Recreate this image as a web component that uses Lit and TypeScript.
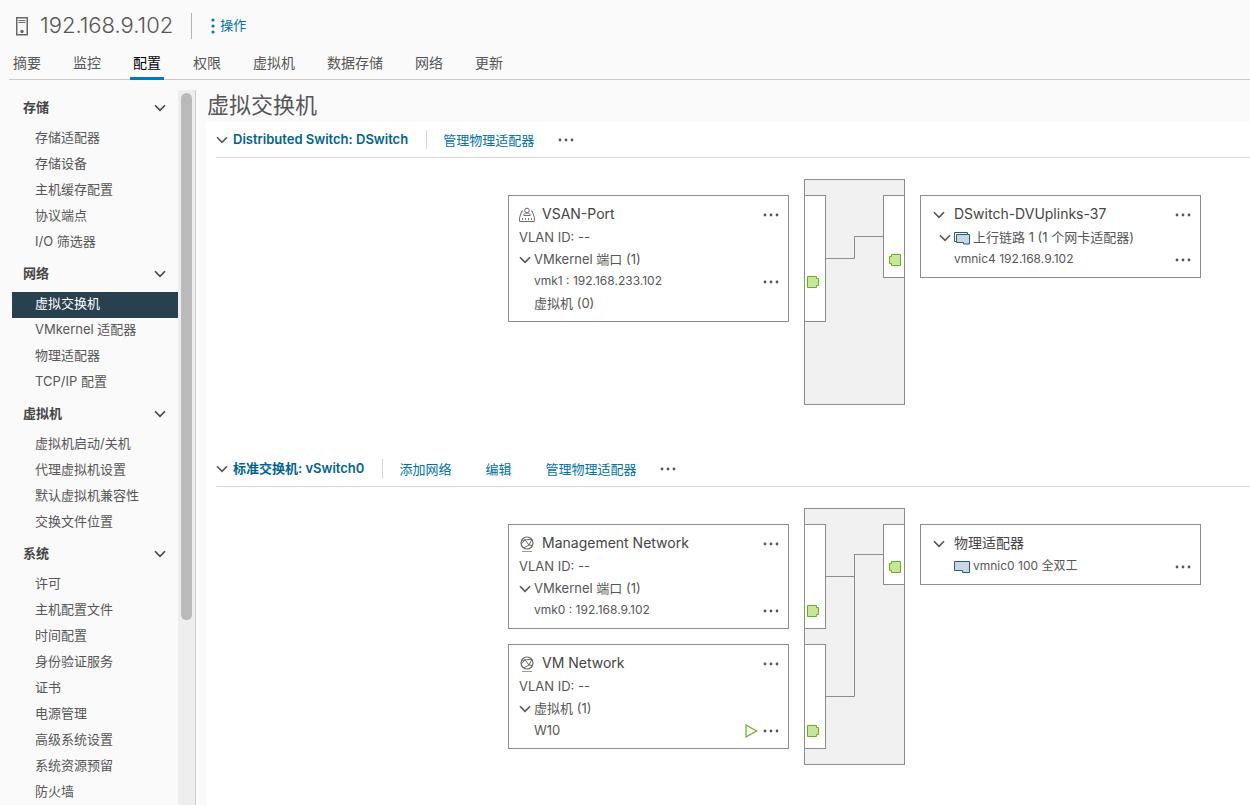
import { LitElement, html, svg, css, nothing } from "lit";
import { customElement, property } from "lit/decorators.js";
import { classMap } from "lit/directives/class-map.js";

type Row = { text: string; indent?: boolean; toggle?: boolean; small?: boolean; icon?: string; menu?: boolean; play?: boolean; port?: boolean };
type Card = { title: string; icon: string; rows: Row[] };
type VSwitch = { name: string; actions: string[]; left: Card[]; right: Card };

const TABS = ["摘要", "监控", "配置", "权限", "虚拟机", "数据存储", "网络", "更新"];

const GROUPS = [
  { name: "存储", items: ["存储适配器", "存储设备", "主机缓存配置", "协议端点", "I/O 筛选器"] },
  { name: "网络", items: ["虚拟交换机", "VMkernel 适配器", "物理适配器", "TCP/IP 配置"] },
  { name: "虚拟机", items: ["虚拟机启动/关机", "代理虚拟机设置", "默认虚拟机兼容性", "交换文件位置"] },
  { name: "系统", items: ["许可", "主机配置文件", "时间配置", "身份验证服务", "证书", "电源管理", "高级系统设置", "系统资源预留", "防火墙"] },
];

const SWITCHES: VSwitch[] = [
  {
    name: "Distributed Switch: DSwitch",
    actions: ["管理物理适配器"],
    left: [
      {
        title: "VSAN-Port",
        icon: "portgroup",
        rows: [
          { text: "VLAN ID: --" },
          { text: "VMkernel 端口 (1)", toggle: true },
          { text: "vmk1 : 192.168.233.102", indent: true, small: true, menu: true, port: true },
          { text: "虚拟机 (0)", indent: true },
        ],
      },
    ],
    right: {
      title: "DSwitch-DVUplinks-37",
      icon: "chevron",
      rows: [
        { text: "上行链路 1 (1 个网卡适配器)", toggle: true, icon: "nics" },
        { text: "vmnic4 192.168.9.102", indent: true, small: true, menu: true, port: true },
      ],
    },
  },
  {
    name: "标准交换机: vSwitch0",
    actions: ["添加网络", "编辑", "管理物理适配器"],
    left: [
      {
        title: "Management Network",
        icon: "network",
        rows: [
          { text: "VLAN ID: --" },
          { text: "VMkernel 端口 (1)", toggle: true },
          { text: "vmk0 : 192.168.9.102", indent: true, small: true, menu: true, port: true },
        ],
      },
      {
        title: "VM Network",
        icon: "network",
        rows: [
          { text: "VLAN ID: --" },
          { text: "虚拟机 (1)", toggle: true },
          { text: "W10", indent: true, menu: true, play: true, port: true },
        ],
      },
    ],
    right: {
      title: "物理适配器",
      icon: "chevron",
      rows: [{ text: "vmnic0 100 全双工", indent: true, small: true, icon: "nic", menu: true, port: true }],
    },
  },
];

const chevron = html`<svg class="chev" width="12" height="8" viewBox="0 0 12 8" aria-hidden="true">
  <path d="M1 1.2 6 6.4 11 1.2" fill="none" stroke="currentColor" stroke-width="1.6" />
</svg>`;

const dots = html`<svg width="16" height="4" viewBox="0 0 16 4" aria-hidden="true">
  <g fill="currentColor"><circle cx="2" cy="2" r="1.4" /><circle cx="8" cy="2" r="1.4" /><circle cx="14" cy="2" r="1.4" /></g>
</svg>`;

const ICONS: Record<string, unknown> = {
  portgroup: html`<svg width="16" height="16" viewBox="0 0 16 16" fill="none" stroke="#6a6a6a" aria-hidden="true">
    <circle cx="8" cy="3.5" r="2.3" />
    <path d="M4 4H2.800L.6 10.500v4h14.800v-4L13.200 4H12M4.800 8.500C4.800 6.800 6.200 6 8 6s3.200.8 3.200 2.500z" />
    <path d="M3.500 11v2M6.500 11v2M9.500 11v2M12.500 11v2" />
  </svg>`,
  network: html`<svg width="16" height="16" viewBox="0 0 16 16" fill="none" stroke="#6a6a6a" aria-hidden="true">
    <circle cx="8" cy="7" r="6" stroke-width="1.2" />
    <path d="M2.500 5 6 3.800 12.800 3.500M6 3.800 10 9 12.800 3.500M10 9 13.500 9.500M10 9 5 11.800M2.200 8 6 3.800" />
    <path d="M3 15.500h10" stroke="#9a9a9a" />
  </svg>`,
  nics: html`<svg width="16" height="13" viewBox="0 0 16 13" stroke="#25607f" aria-hidden="true">
    <path d="M.5 9.500V.5h13v2M.5 9.500H2" fill="none" />
    <path d="M2.500 2.500h13v9.500H9.500V10.500h-7z" fill="#c8d7e0" />
  </svg>`,
  nic: html`<svg width="16" height="12" viewBox="0 0 16 12" stroke="#25607f" aria-hidden="true">
    <path d="M.5.5h15v11h-7v-2h-8z" fill="#c8d7e0" />
  </svg>`,
};

/* Vertical metrics shared by the cards and the diagram between them. */
const PAD = 16;
const GAP = 15;
const HEAD = 32;
const ROW = 22;
const FOOT = 7;
const MIN_HEIGHT = 226;

const cardHeight = (card: Card) => HEAD + ROW * card.rows.length + FOOT;

@customElement("switch-fabric")
class SwitchFabric extends LitElement {
  @property({ attribute: false }) model!: VSwitch;

  static styles = css`
    :host { display: block; }
    svg { display: block; }
    .line { fill: none; stroke: #8c8c8c; }
    .body { fill: #f1f1f1; stroke: #8c8c8c; }
    .strip { fill: #fff; stroke: #8c8c8c; }
    .port { fill: #c7e59c; stroke: #60b515; }
  `;

  private ports(card: Card, top: number, right: boolean) {
    return card.rows.map((row, i) => {
      if (!row.port) return nothing;
      const y = top + HEAD + ROW * i + 5;
      return right
        ? svg`<path class="port" d=${`M96.5 ${y + 0.5}v11H87.5v-2H85.5v-7H87.5v-2z`} />`
        : svg`<path class="port" d=${`M3.5 ${y + 0.5}v11h9v-2h2v-7h-2v-2z`} />`;
    });
  }

  render() {
    const { left, right } = this.model;
    let y = PAD;
    const blocks = left.map((card) => {
      const block = { card, top: y, height: cardHeight(card) };
      y += block.height + GAP;
      return block;
    });
    const height = Math.max(MIN_HEIGHT, y - GAP + PAD);
    const rh = cardHeight(right);
    const ry = PAD + Math.floor(rh / 2) + 0.5;
    return html`<svg width="101" height=${height} viewBox=${`0 0 101 ${height}`} aria-hidden="true">
      <rect class="body" x="0.5" y="0.5" width="100" height=${height - 1} />
      ${blocks.map((b) => {
        const my = b.top + Math.floor(b.height / 2) + 0.5;
        return svg`<rect class="strip" x="0.5" y=${b.top + 0.5} width="21" height=${b.height - 1} />
          <path class="line" d=${`M21.5 ${my}H50.5V${ry}H79.5`} />
          ${this.ports(b.card, b.top, false)}`;
      })}
      <rect class="strip" x="79.5" y=${PAD + 0.5} width="21" height=${rh - 1} />
      ${this.ports(right, PAD, true)}
    </svg>`;
  }
}

@customElement("port-card")
class PortCard extends LitElement {
  @property({ attribute: false }) card!: Card;

  static styles = css`
    :host { display: block; box-sizing: border-box; width: 281px; padding: 6px 8px 6px 10px; border: 1px solid #8c8c8c; background: #fff; }
    h3 { display: flex; align-items: center; height: 25px; margin: 0; font-size: 14px; font-weight: 400; color: #454545; }
    .lead { display: flex; width: 16px; justify-content: center; margin-right: 7px; }
    .row { display: flex; align-items: center; height: 22px; font-size: 13px; white-space: nowrap; }
    .text { line-height: 20px; padding-bottom: 2px; }
    .small { font-size: 12px; }
    .indent { padding-left: 15px; }
    .leaf { padding-left: 23px; }
    .nested { padding-left: 8px; }
    .picture { display: flex; margin-right: 3px; }
    .end { display: flex; align-items: center; gap: 4px; margin-left: auto; }
    button { display: flex; padding: 0; border: 0; background: none; color: #565656; font: inherit; cursor: pointer; }
    .more { padding: 4px 1px; }
    .toggle { align-items: center; }
    .toggle .chev { margin-right: 3px; }
  `;

  render() {
    const { card } = this;
    const foldable = card.icon === "chevron";
    const menu = html`<button class="more" aria-label="更多">${dots}</button>`;
    return html`
      <h3>
        ${foldable
          ? html`<button class="lead" aria-label=${card.title}>${chevron}</button>`
          : html`<span class="lead">${ICONS[card.icon]}</span>`}
        <span class="text">${card.title}</span>
        ${foldable && card.rows.length === 1 ? nothing : html`<span class="end">${menu}</span>`}
      </h3>
      ${card.rows.map((row) => {
        const icon = row.icon ? html`<span class="picture">${ICONS[row.icon]}</span>` : nothing;
        const text = html`<span class="text">${row.text}</span>`;
        const classes = { row: true, small: !!row.small, indent: !!row.indent && !foldable, leaf: !!row.indent && foldable };
        return html`<div class=${classMap(classes)}>
          ${row.toggle
            ? html`<button class=${classMap({ toggle: true, nested: foldable })}>${chevron}${icon}${text}</button>`
            : html`${icon}${text}`}
          ${row.menu
            ? html`<span class="end">
                ${row.play
                  ? html`<svg width="13" height="14" viewBox="0 0 13 14" aria-hidden="true"><path d="M1 1v12l10.500-6z" fill="#fff" stroke="#60b515" stroke-width="1.2" /></svg>`
                  : nothing}
                ${menu}
              </span>`
            : nothing}
        </div>`;
      })}
    `;
  }
}

@customElement("app-root")
class AppRoot extends LitElement {
  static styles = css`
    :host {
      display: flex; flex-direction: column; height: 100vh; overflow: hidden; background: #fafafa; color: #565656;
      font-family: Inter, "Noto Sans CJK SC", sans-serif; font-size: 13px; line-height: 20px;
    }
    button { padding: 0; border: 0; background: none; font: inherit; color: inherit; cursor: pointer; }
    a { color: inherit; text-decoration: none; }
    .text { padding-bottom: 2px; }
    .top { display: flex; align-items: center; height: 52px; padding-left: 16px; flex: none; }
    .top h1 { margin: 0 18px 0 12px; padding-bottom: 2px; font-size: 22px; font-weight: 300; line-height: 28px; }
    .ops { display: flex; align-items: center; gap: 5px; height: 26px; padding-left: 19px; border-left: 1px solid #b3b3b3; color: #0072a3; }
    .tabs { display: flex; flex: none; gap: 26px; height: 27px; padding-left: 1px; margin-left: 9px; border-bottom: 1px solid #ccc; font-size: 14px; }
    .tabs a { height: 25px; padding: 0 3px; line-height: 22px; }
    .tabs .on { color: #000; border-bottom: 3px solid #0079b8; }
    .cols { display: flex; flex: 1; min-height: 0; padding-top: 10px; }
    nav { width: 166px; flex: none; margin-left: 12px; overflow: hidden; }
    .group { display: flex; align-items: center; justify-content: space-between; width: 100%; height: 36px; padding: 0 12px 0 11px; font-weight: 600; color: #454545; }
    .item { display: block; height: 26px; padding-left: 23px; line-height: 22px; }
    .item.on { background: #29414e; color: #fff; }
    .track { width: 17px; flex: none; background: #eee; border-right: 1px solid #ccc; }
    .thumb { width: 11px; height: 527px; margin: 3px; border-radius: 6px; background: #bababa; }
    main { flex: 1; min-width: 0; display: flex; flex-direction: column; margin-left: 10px; }
    h2 { margin: 0; height: 32px; padding-left: 1px; font-size: 22px; font-weight: 400; line-height: 30px; flex: none; }
    .pane { flex: 1; min-height: 0; overflow: hidden; padding-left: 10px; background: #fff; }
    .bar { display: flex; align-items: center; height: 35px; border-bottom: 1px solid #d7d7d7; color: #0072a3; }
    .name { display: flex; align-items: center; gap: 5px; padding-right: 18px; font-weight: 600; color: #00648f; }
    .name svg { color: #565656; }
    .acts { display: flex; align-items: center; gap: 34px; height: 19px; padding: 0 24px 0 16px; border-left: 1px solid #d7d7d7; }
    .bar .more { display: flex; padding: 4px 0; color: #565656; }
    .stage { display: flex; align-items: flex-start; gap: 15px; padding: 21px 0 46px 292px; }
    .stack { display: flex; flex-direction: column; gap: 15px; padding-top: 16px; }
  `;

  render() {
    return html`
      <header class="top">
        <svg width="12" height="19" viewBox="0 0 12 19" fill="none" stroke="#666" aria-hidden="true">
          <path d="M.75.75h10.500v17H.75z" stroke-width="1.5" />
          <path d="M2.500 3.500h7M2.500 5.500h7" />
          <circle cx="6" cy="14.500" r="1.700" fill="#666" stroke="none" />
        </svg>
        <h1>192.168.9.102</h1>
        <button class="ops">
          <svg width="4" height="16" viewBox="0 0 4 16" fill="#0079b8" aria-hidden="true"><circle cx="2" cy="2" r="1.600" /><circle cx="2" cy="8" r="1.600" /><circle cx="2" cy="14" r="1.600" /></svg>
          <span class="text">操作</span>
        </button>
      </header>
      <div class="tabs">${TABS.map((t) => html`<a href="#" class=${classMap({ on: t === "配置" })}>${t}</a>`)}</div>
      <div class="cols">
        <nav>
          ${GROUPS.map(
            (g) => html`<button class="group"><span class="text">${g.name}</span>${chevron}</button>
              ${g.items.map((i) => html`<a href="#" class=${classMap({ item: true, on: i === "虚拟交换机" })}>${i}</a>`)}`
          )}
        </nav>
        <div class="track"><div class="thumb"></div></div>
        <main>
          <h2>虚拟交换机</h2>
          <div class="pane">
            ${SWITCHES.map(
              (s) => html`<section>
                <div class="bar">
                  <button class="name">${chevron}<span class="text">${s.name}</span></button>
                  <div class="acts">${s.actions.map((a) => html`<button>${a}</button>`)}</div>
                  <button class="more" aria-label="更多">${dots}</button>
                </div>
                <div class="stage">
                  <div class="stack">${s.left.map((c) => html`<port-card .card=${c}></port-card>`)}</div>
                  <switch-fabric .model=${s}></switch-fabric>
                  <div class="stack"><port-card .card=${s.right}></port-card></div>
                </div>
              </section>`
            )}
          </div>
        </main>
      </div>
    `;
  }
}
